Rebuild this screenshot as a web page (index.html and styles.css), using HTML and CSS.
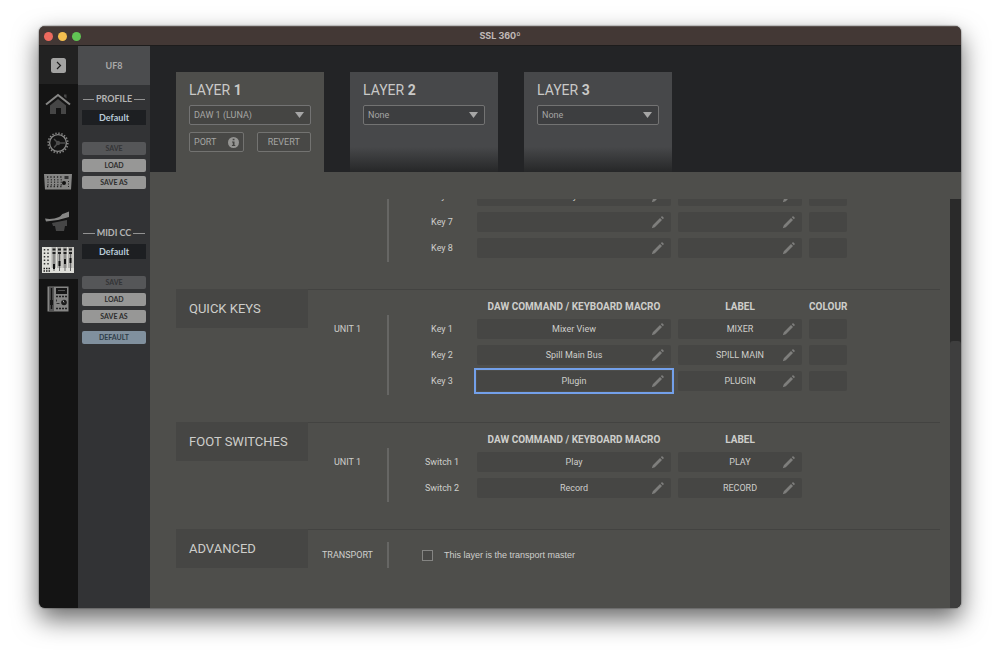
FILE: index.html
```html
<!DOCTYPE html>
<html lang="en">
<head>
<meta charset="utf-8">
<title>SSL 360°</title>
<link rel="stylesheet" href="styles.css">
</head>
<body>
<svg class="defs" aria-hidden="true">
  <symbol id="pencil" viewBox="0 0 14 14">
    <path d="M.8 13.200l1-3L9 3l2 2-7.200 7.200zM9.800 2.200l1.200-1.200 2 2-1.200 1.200z"/>
  </symbol>
</svg>
<div class="window">
  <header class="titlebar">
    <div class="lights"><span class="light red"></span><span class="light yellow"></span><span class="light green"></span></div>
    <h1 class="window-title">SSL 360º</h1>
  </header>
  <div class="app">
    <nav class="rail" aria-label="Devices">
      <button class="rail-item rail-toggle" aria-label="Expand">
        <svg width="15" height="15" viewBox="0 0 15 15"><rect width="15" height="15" rx="2.500" fill="#a3a3a2"/><path d="M6 4l3.500 3.500L6 11" fill="none" stroke="#1c1c1c" stroke-width="1.200"/></svg>
      </button>
      <button class="rail-item" aria-label="Home">
        <svg width="26" height="22" viewBox="0 0 26 22"><path d="M5 12.500l8-6.500 8 6.500V21h-5v-6h-5v6H5z" fill="#464646"/><path d="M19 1.500h2.500v4L19 3.500z" fill="#464646"/><path d="M1 11.500L13 2l12 9.500" fill="none" stroke="#868685" stroke-width="2"/></svg>
      </button>
      <button class="rail-item" aria-label="Settings">
        <svg width="22" height="22" viewBox="0 0 22 22"><circle cx="11" cy="11" r="9.800" fill="none" stroke="#868685" stroke-width="1.600" stroke-dasharray="1.400 1.679"/><circle cx="11" cy="11" r="8.400" fill="none" stroke="#868685" stroke-width="1.400"/><path d="M11 11L7 7M11 11h7M11 11l-4 4.500" stroke="#4c4c4c" stroke-width="1.500"/><circle cx="11" cy="11" r="2.200" fill="#4c4c4c"/></svg>
      </button>
      <button class="rail-item" aria-label="UC1">
        <svg width="28" height="16" viewBox="0 0 28 16"><path d="M0 0h28l-1 15.500H1z" fill="#858584"/><path d="M3 3h15M3 12.500h15" stroke="#222" stroke-width="1.300" stroke-dasharray="1.300 2"/><path d="M4 5v7M7.300 5v7M10.600 5v7M13.900 5v7M17.200 5v7" stroke="#2c2c2c" stroke-width="1" stroke-dasharray="1.500 1"/><circle cx="20" cy="9" r="2" fill="#111"/><path d="M20.500 2h4v3h-4z" fill="#333"/><path d="M24.500 7v7" stroke="#222" stroke-dasharray="1 1.500"/></svg>
      </button>
      <button class="rail-item" aria-label="Channel strip">
        <svg width="28" height="24" viewBox="0 0 28 24"><path d="M8 14l15-3v6h-2l-1 5h-8l-1-5H9z" fill="#464646"/><path d="M1 9.500c4 1 10 .5 14-1.500 3-1.500 2-3 5-3.500l5-2V8L14 11 2 12.500z" fill="#868685"/></svg>
      </button>
      <button class="rail-item is-active" aria-label="UF8" aria-current="page">
        <svg width="32" height="26" viewBox="0 0 32 26"><rect width="32" height="26" fill="#deded9"/><path d="M9 0h23v21H9z" fill="#b1b0ac"/><path d="M2.500 2v16M6 2v16" stroke="#333" stroke-width="1.500" stroke-dasharray="1.500 2"/><path d="M1.500 21.500h7M1.500 24h7" stroke="#222" stroke-width="1.500" stroke-dasharray="1.500 1"/><path d="M9 0v26M14.500 0v26M20 0v26M25.500 0v26M31 0v26" stroke="#deded9"/><path d="M12 6v18M17.500 6v18M23 6v18M28.500 6v18" stroke="#666"/><path d="M10.500 2.500h20.500M10.500 6h20.500" stroke="#222" stroke-width="2" stroke-dasharray="3 2.500"/><path d="M12 17v5M17.500 14v5M23 12v5M28.500 11v5" stroke="#111" stroke-width="2"/></svg>
      </button>
      <button class="rail-item" aria-label="UF1">
        <svg width="22" height="26" viewBox="0 0 22 26"><rect x=".5" y=".5" width="21" height="25" fill="#858584"/><path d="M2 1h5v24H2z" fill="#555"/><path d="M4.500 2v21" stroke="#111" stroke-width="1.500"/><path d="M3 14h3v5H3zM9 2h11v6H9z" fill="#161616"/><path d="M11 4.500h7" stroke="#555"/><path d="M9 10.500h11M9 22.500h11" stroke="#222" stroke-width="1.500" stroke-dasharray="2 1"/><circle cx="17" cy="16.500" r="2.800" fill="#1b1b1b"/><path d="M17 16.500l-1-2" stroke="#aaa"/><path d="M9.500 13.500v2M9.500 17.500h3" stroke="#333"/></svg>
      </button>
    </nav>

    <aside class="panel">
      <h2 class="panel-device">UF8</h2>
      <section class="preset">
        <h3 class="preset-title">PROFILE</h3>
        <input class="preset-name" type="text" value="Default" aria-label="Profile name">
        <div class="preset-actions">
          <button class="panel-button" disabled>SAVE</button>
          <button class="panel-button">LOAD</button>
          <button class="panel-button">SAVE AS</button>
        </div>
      </section>
      <section class="preset">
        <h3 class="preset-title">MIDI CC</h3>
        <input class="preset-name" type="text" value="Default" aria-label="MIDI CC name">
        <div class="preset-actions">
          <button class="panel-button" disabled>SAVE</button>
          <button class="panel-button">LOAD</button>
          <button class="panel-button">SAVE AS</button>
        </div>
        <button class="panel-button panel-default">DEFAULT</button>
      </section>
    </aside>

    <main class="main">
      <div class="layers">
        <section class="layer is-open">
          <h2 class="layer-title">LAYER <b>1</b></h2>
          <select class="layer-select" aria-label="Layer 1 DAW"><option>DAW 1 (LUNA)</option></select>
          <div class="layer-actions">
            <button class="outline-button port">PORT
              <svg width="11" height="11" viewBox="0 0 11 11"><circle cx="5.500" cy="5.500" r="5.500" fill="#959593"/><path d="M4.700 1.800h1.800v1.500H4.700zM4 4.400h2.500V8h.8v1H3.900V8h.9V5.400H4z" fill="#444442"/></svg>
            </button>
            <button class="outline-button">REVERT</button>
          </div>
        </section>
        <section class="layer">
          <h2 class="layer-title">LAYER <b>2</b></h2>
          <select class="layer-select" aria-label="Layer 2 DAW"><option>None</option></select>
        </section>
        <section class="layer">
          <h2 class="layer-title">LAYER <b>3</b></h2>
          <select class="layer-select" aria-label="Layer 3 DAW"><option>None</option></select>
        </section>
      </div>

      <div class="viewport">
        <div class="sections">
          <section class="group is-scrolled">
            <div></div>
            <div></div>
            <div class="divider"></div>
            <table class="keys">
              <colgroup><col class="col-key"><col class="col-command"><col class="col-label"><col class="col-colour"></colgroup>
              <tbody>
                <tr><th scope="row">Key 6</th><td><div class="field"><input type="text" value="Layer" aria-label="Key 6 command"><button aria-label="Edit"><svg><use href="#pencil"/></svg></button></div></td><td><div class="field"><input type="text" aria-label="Key 6 label"><button aria-label="Edit"><svg><use href="#pencil"/></svg></button></div></td><td><button class="swatch" aria-label="Key 6 colour"></button></td></tr>
                <tr><th scope="row">Key 7</th><td><div class="field"><input type="text" aria-label="Key 7 command"><button aria-label="Edit"><svg><use href="#pencil"/></svg></button></div></td><td><div class="field"><input type="text" aria-label="Key 7 label"><button aria-label="Edit"><svg><use href="#pencil"/></svg></button></div></td><td><button class="swatch" aria-label="Key 7 colour"></button></td></tr>
                <tr><th scope="row">Key 8</th><td><div class="field"><input type="text" aria-label="Key 8 command"><button aria-label="Edit"><svg><use href="#pencil"/></svg></button></div></td><td><div class="field"><input type="text" aria-label="Key 8 label"><button aria-label="Edit"><svg><use href="#pencil"/></svg></button></div></td><td><button class="swatch" aria-label="Key 8 colour"></button></td></tr>
              </tbody>
            </table>
          </section>

          <section class="group">
            <h2 class="group-title">QUICK KEYS</h2>
            <div class="unit">UNIT 1</div>
            <div class="divider"></div>
            <table class="keys">
              <colgroup><col class="col-key"><col class="col-command"><col class="col-label"><col class="col-colour"></colgroup>
              <thead><tr><td></td><th scope="col">DAW COMMAND / KEYBOARD MACRO</th><th scope="col">LABEL</th><th scope="col">COLOUR</th></tr></thead>
              <tbody>
                <tr><th scope="row">Key 1</th><td><div class="field"><input type="text" value="Mixer View" aria-label="Key 1 command"><button aria-label="Edit"><svg><use href="#pencil"/></svg></button></div></td><td><div class="field"><input type="text" value="MIXER" aria-label="Key 1 label"><button aria-label="Edit"><svg><use href="#pencil"/></svg></button></div></td><td><button class="swatch" aria-label="Key 1 colour"></button></td></tr>
                <tr><th scope="row">Key 2</th><td><div class="field"><input type="text" value="Spill Main Bus" aria-label="Key 2 command"><button aria-label="Edit"><svg><use href="#pencil"/></svg></button></div></td><td><div class="field"><input type="text" value="SPILL MAIN" aria-label="Key 2 label"><button aria-label="Edit"><svg><use href="#pencil"/></svg></button></div></td><td><button class="swatch" aria-label="Key 2 colour"></button></td></tr>
                <tr><th scope="row">Key 3</th><td><div class="field is-selected"><input type="text" value="Plugin" aria-label="Key 3 command"><button aria-label="Edit"><svg><use href="#pencil"/></svg></button></div></td><td><div class="field"><input type="text" value="PLUGIN" aria-label="Key 3 label"><button aria-label="Edit"><svg><use href="#pencil"/></svg></button></div></td><td><button class="swatch" aria-label="Key 3 colour"></button></td></tr>
              </tbody>
            </table>
          </section>

          <section class="group">
            <h2 class="group-title">FOOT SWITCHES</h2>
            <div class="unit">UNIT 1</div>
            <div class="divider"></div>
            <table class="keys">
              <colgroup><col class="col-key"><col class="col-command"><col class="col-label"><col class="col-colour"></colgroup>
              <thead><tr><td></td><th scope="col">DAW COMMAND / KEYBOARD MACRO</th><th scope="col">LABEL</th><td></td></tr></thead>
              <tbody>
                <tr><th scope="row">Switch 1</th><td><div class="field"><input type="text" value="Play" aria-label="Switch 1 command"><button aria-label="Edit"><svg><use href="#pencil"/></svg></button></div></td><td><div class="field"><input type="text" value="PLAY" aria-label="Switch 1 label"><button aria-label="Edit"><svg><use href="#pencil"/></svg></button></div></td><td></td></tr>
                <tr><th scope="row">Switch 2</th><td><div class="field"><input type="text" value="Record" aria-label="Switch 2 command"><button aria-label="Edit"><svg><use href="#pencil"/></svg></button></div></td><td><div class="field"><input type="text" value="RECORD" aria-label="Switch 2 label"><button aria-label="Edit"><svg><use href="#pencil"/></svg></button></div></td><td></td></tr>
              </tbody>
            </table>
          </section>

          <section class="group is-advanced">
            <h2 class="group-title">ADVANCED</h2>
            <div class="unit">TRANSPORT</div>
            <div class="divider"></div>
            <label class="master"><input type="checkbox">This layer is the transport master</label>
          </section>
        </div>
        <div class="scrollbar"><div class="thumb"></div></div>
      </div>
    </main>
  </div>
</div>
</body>
</html>
```
FILE: styles.css
```css
* { box-sizing: border-box; }

body {
  margin: 0;
  padding: 26px 39px 52px;
  background: #fff;
  font-family: Roboto, "Liberation Sans", sans-serif;
  font-size: 9px;
  line-height: 14px;
  color: #cececb;
}

h1, h2, h3 { margin: 0; font-weight: 400; }

button, input, select { margin: 0; padding: 0; border: 0; font: inherit; color: inherit; }

.defs { display: none; }

.window {
  display: flex;
  flex-direction: column;
  min-height: calc(100vh - 78px);
  border-radius: 6px;
  overflow: hidden;
  background: #4e4e4b;
  box-shadow: 0 0 1px 1px rgba(0, 0, 0, 0.2), 0 11px 26px rgba(0, 0, 0, 0.6);
}

.titlebar {
  display: grid;
  grid-template-columns: 1fr auto 1fr;
  align-items: center;
  height: 20px;
  padding: 0 5px;
  background: #433835;
  border-top: 1px solid #5c5350;
  border-bottom: 1px solid #1d1c1c;
}
.lights { display: flex; gap: 5px; }
.light { width: 9px; height: 9px; border-radius: 50%; }
.red { background: #ed6a5e; }
.yellow { background: #f5bf4f; }
.green { background: #61c554; }
.window-title {
  font: 700 9px/14px Inter, "Liberation Sans", sans-serif;
  color: #c0b9b7;
}

.app { display: flex; flex: 1; }

.rail { display: flex; flex-direction: column; width: 39px; background: #141414; }
.rail-item {
  display: flex;
  align-items: center;
  justify-content: center;
  height: 39px;
  padding-right: 1px;
  background: transparent;
}
.rail-toggle { height: 38px; background: #222; }
.rail-item.is-active { background: #323335; }

.panel { width: 72px; background: #323335; font-family: Lato, sans-serif; }
.panel-device {
  height: 39px;
  background: #4b4c4e;
  font-size: 9px;
  font-weight: 700;
  line-height: 39px;
  text-align: center;
  color: #a9a9a9;
}
.preset { display: flex; flex-direction: column; min-height: 134px; padding: 7px 4px 0; }
.preset-title {
  display: flex;
  align-items: center;
  gap: 2px;
  margin: 0 1px 4px;
  font-size: 9px;
  font-weight: 700;
  color: #b4b4b4;
}
.preset-title::before, .preset-title::after { content: ""; flex: 1; height: 1px; background: #929292; }
.preset-name {
  width: 100%;
  height: 15px;
  background: #1d1f22;
  font-size: 9px;
  font-weight: 700;
  text-align: center;
  color: #b9cbd8;
}
.preset-actions { display: flex; flex-direction: column; gap: 4px; margin-top: 17px; }
.panel-button {
  height: 13px;
  border-radius: 2px;
  background: #979796;
  font-size: 7px;
  font-weight: 700;
  line-height: 13px;
  color: #2c2c2c;
}
.panel-button:disabled { background: #555658; color: #333436; }
.panel-default { margin-top: 8px; background: #80909e; color: #2f3d48; }

.main { display: flex; flex: 1; flex-direction: column; min-width: 0; }

.layers { display: flex; gap: 26px; height: 126px; padding: 26px 26px 0; background: #232426; }
.layer {
  width: 148px;
  padding: 10px 13px;
  background: linear-gradient(#47484a 75%, #262728);
}
.layer.is-open { background: #4e4e4b; }
.layer-title { margin-bottom: 7px; font-size: 14px; line-height: 16px; color: #c9c9c7; }
.layer-select {
  display: block;
  width: 100%;
  height: 20px;
  padding: 0 4px;
  border: 1px solid #737373;
  border-radius: 2px;
  appearance: none;
  background: #3d3e40 url("data:image/svg+xml,%3Csvg xmlns='http://www.w3.org/2000/svg' width='9' height='6'%3E%3Cpath d='M0 0h9L4.5 6z' fill='%23a6a6a6'/%3E%3C/svg%3E") no-repeat right 6px center;
  color: #a5a5a4;
}
.layer.is-open .layer-select { background-color: #454543; }
.layer-actions { display: grid; grid-template-columns: 1fr 1fr; gap: 13px; margin-top: 7px; }
.outline-button {
  display: flex;
  align-items: center;
  justify-content: center;
  height: 20px;
  border: 1px solid #737371;
  border-radius: 2px;
  background: #484846;
  color: #a5a5a3;
}
.port { justify-content: space-between; padding: 0 4px; }

.viewport { display: flex; flex: 1; padding-top: 27px; }
.sections { flex: 1; min-width: 0; padding: 0 10px 0 26px; overflow: hidden; }
.scrollbar { display: flex; flex-direction: column; width: 11px; padding-top: 142px; background: #2a2a2a; }
.thumb { flex: 1; border-radius: 3px 3px 0 0; background: #3e3e3e; }

.group {
  display: grid;
  grid-template-columns: 132px 79px 2px 1fr;
  padding-bottom: 25px;
  border-top: 1px solid #434341;
}
.group-title {
  height: 39px;
  margin-top: -1px;
  padding: 0 13px;
  background: #464644;
  font-size: 13px;
  line-height: 39px;
}
.unit { padding-top: 32px; text-align: center; }
.divider { margin: 25px 0 2px; background: #666664; }

.is-scrolled { margin-top: -13px; border-top: 0; }
.is-scrolled .divider { margin-top: 0; }

.is-advanced .unit { padding-top: 18px; }
.is-advanced .divider { margin: 12px 0 0; }

.keys { justify-self: start; width: 447px; margin-left: 18px; border-collapse: collapse; table-layout: fixed; }
.col-key { width: 70px; }
.col-command { width: 201px; }
.col-label { width: 131px; }
.col-colour { width: 45px; }
.keys th, .keys td { padding: 0 7px 6px 0; }
.keys tbody th { padding-right: 0; font-weight: 400; text-align: center; }
.keys thead th { padding: 10px 7px 5px 0; font-size: 10px; font-weight: 700; white-space: nowrap; }

.field {
  display: grid;
  grid-template-columns: 1fr 26px;
  height: 20px;
  padding-left: 26px;
  border-radius: 2px;
  background: #464644;
}
.field input { width: 100%; min-width: 0; background: transparent; text-align: center; outline: 0; }
.field button { display: flex; align-items: center; justify-content: center; background: transparent; }
.field svg { width: 14px; height: 14px; fill: #7e7e7c; }
.field.is-selected { border-radius: 0; outline: 2px solid #73a0ea; outline-offset: 1px; }
.swatch { display: block; width: 100%; height: 20px; border-radius: 2px; background: #464644; }

.master {
  display: flex;
  align-items: center;
  gap: 11px;
  height: 14px;
  margin: 18px 0 0 33px;
  font-family: "Liberation Sans", sans-serif;
}
.master input { appearance: none; width: 11px; height: 11px; border: 1px solid #848482; background: #484846; }
```
